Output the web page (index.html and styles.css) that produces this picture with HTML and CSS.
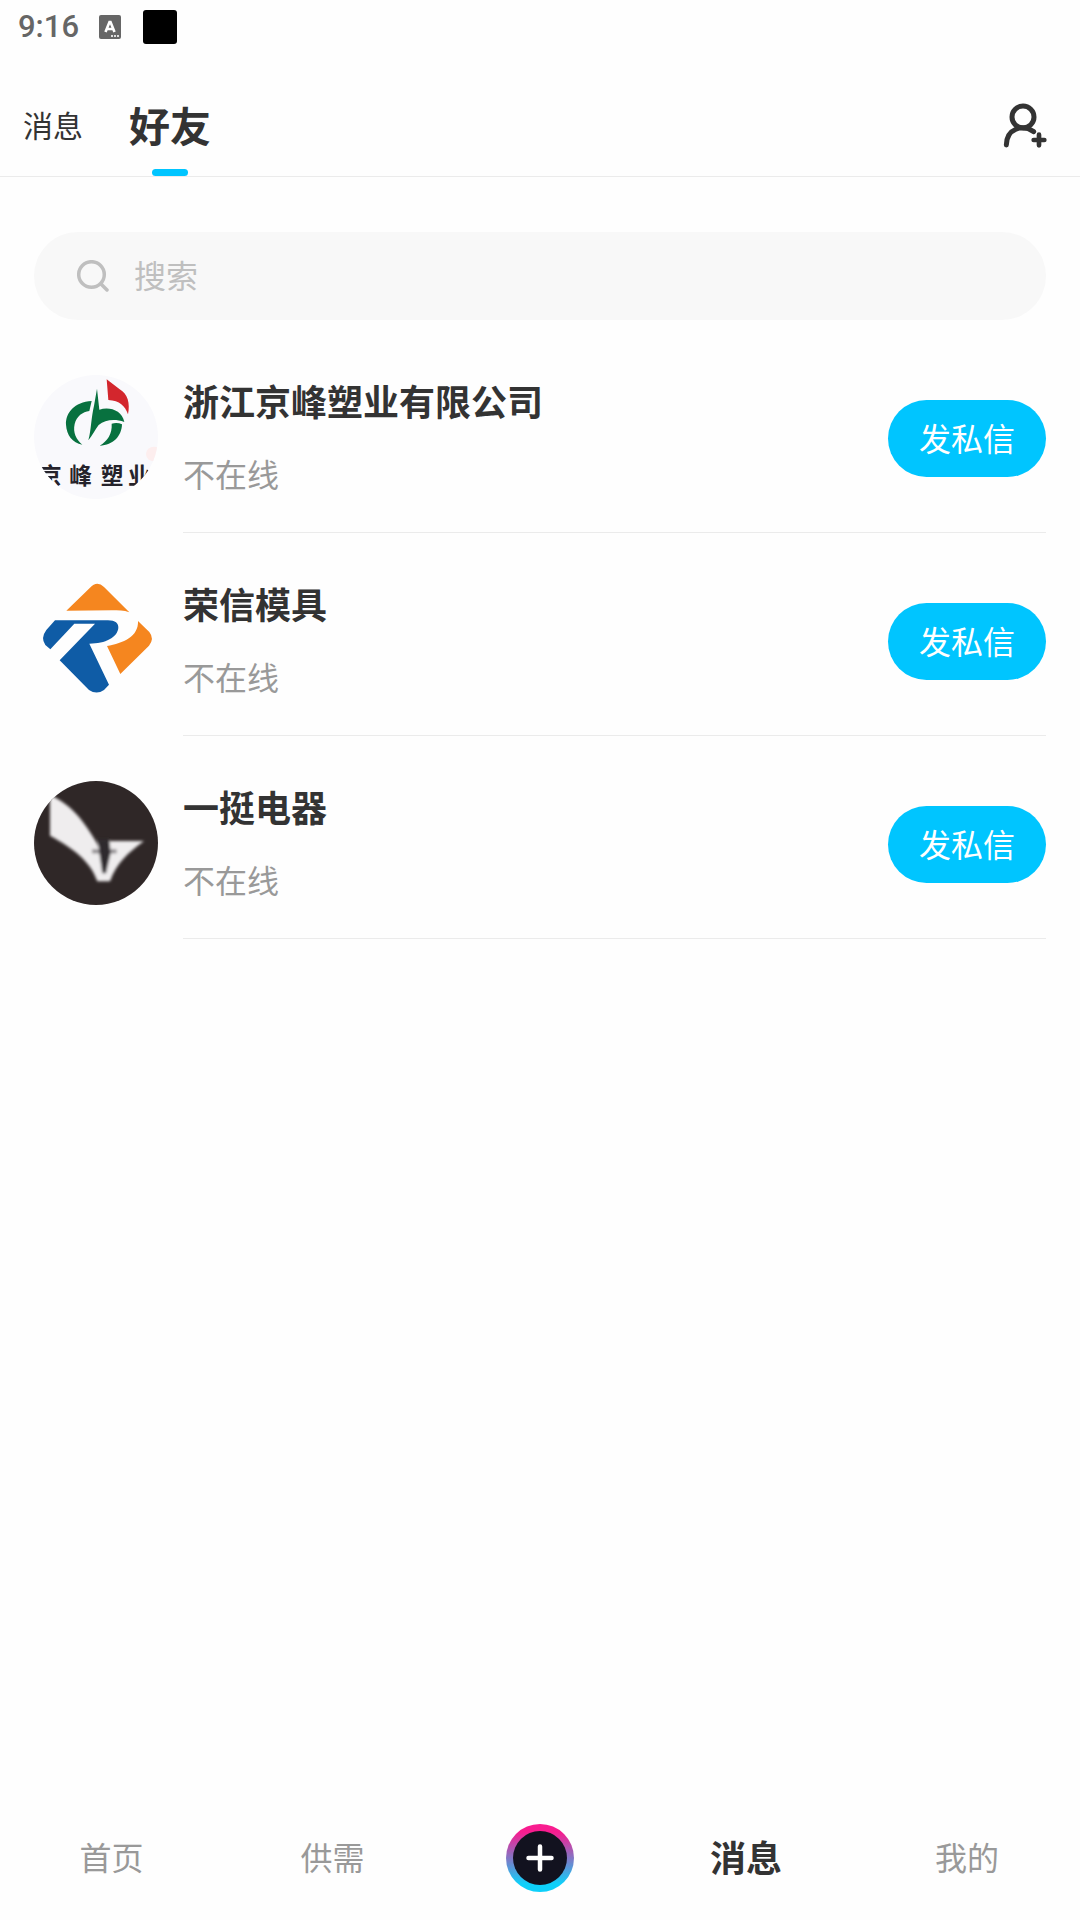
FILE: index.html
```html
<!DOCTYPE html>
<html lang="zh-CN">
<head>
<meta charset="utf-8">
<meta name="viewport" content="width=device-width, initial-scale=1">
<title>好友</title>
<link rel="stylesheet" href="styles.css">
</head>
<body>
<div class="status-bar">
  <span class="clock">9:16</span>
  <svg class="ime-icon" viewBox="0 0 22 24" aria-hidden="true">
    <rect width="22" height="24" rx="2" fill="#666"/>
    <path d="M6.500 17 10.500 7h1L15.500 17M8 14h6" fill="none" stroke="#fff" stroke-width="2.600"/>
    <path d="M12 21h2m1 0h2m1 0h2" stroke="#ddd" stroke-width="2"/>
  </svg>
  <span class="status-block"></span>
</div>

<header class="header">
  <nav class="tabs">
    <a class="tab" href="#messages">消息</a>
    <a class="tab tab-active" href="#friends" aria-current="page">好友</a>
  </nav>
  <button class="add-friend" type="button" aria-label="添加好友">
    <svg viewBox="130 67 132 138" fill="none" stroke="#333" stroke-linecap="round" aria-hidden="true">
      <circle cx="190" cy="112" r="33" stroke-width="15"/>
      <path d="M140 196C141 146 188 133 222 156" stroke-width="15"/>
      <path d="M238 165v32M222 181h32" stroke-width="14"/>
    </svg>
  </button>
</header>

<main class="content">
  <label class="search">
    <svg class="search-icon" viewBox="0 0 32 32" fill="none" stroke="#bfbfbf" stroke-width="3.500" stroke-linecap="round" aria-hidden="true">
      <circle cx="14.500" cy="14.500" r="12.800"/>
      <path d="M24 24l6 6"/>
    </svg>
    <input class="search-input" type="text" placeholder="搜索" aria-label="搜索">
  </label>

  <ul class="friends">
    <li class="friend">
      <svg class="avatar" viewBox="42 45 372 372" role="img" aria-label="京峰塑业">
        <rect x="42" y="45" width="372" height="372" fill="#f9f9fc"/>
        <ellipse cx="402" cy="282" rx="24" ry="22" fill="#fdeeee"/>
        <path d="M260 58L299 88C323 101 331 131 324 163C315 137 299 122 265 120Z" fill="#d3262d"/>
        <path d="M215 123C163 126 137 158 138 194C140 226 157 247 187 254C169 239 158 218 164 192C170 169 188 155 208 153Z" fill="#08713f"/>
        <path d="M231 86L238 149C269 139 306 151 313 186C284 176 256 179 236 195C226 208 217 227 205 241C214 207 213 175 222 137Z" fill="#08713f"/>
        <path d="M275 191C287 188 297 189 306 193C305 228 280 256 239 257C262 243 277 222 275 191Z" fill="#08713f"/>
        <text class="logo-text" y="372"><tspan x="57">京</tspan><tspan x="148">峰</tspan><tspan x="242">塑</tspan><tspan x="324">业</tspan></text>
      </svg>
      <div class="friend-body">
        <div class="friend-info">
          <h2 class="friend-name">浙江京峰塑业有限公司</h2>
          <p class="friend-status">不在线</p>
        </div>
        <button class="message-button" type="button">发私信</button>
      </div>
    </li>
    <li class="friend">
      <svg class="avatar" viewBox="42 39 372 372" role="img" aria-label="荣信模具">
        <path d="M139 137L210 68Q231 46 252 66L328 142C311 136 295 136 275 136Z" fill="#f5861f"/>
        <path d="M354 168L388 201Q404 221 387 242L301 327L261 243C310 234 356 215 354 168Z" fill="#f5861f"/>
        <path d="M105 166H264C286 166 296 175 295 189C292 217 257 236 208 236L267 359L252 375Q230 390 207 375L119 286L225 176H163L91 253L76 240Q61 219 79 195Z" fill="#0f5ca6"/>
      </svg>
      <div class="friend-body">
        <div class="friend-info">
          <h2 class="friend-name">荣信模具</h2>
          <p class="friend-status">不在线</p>
        </div>
        <button class="message-button" type="button">发私信</button>
      </div>
    </li>
    <li class="friend">
      <svg class="avatar" viewBox="42 33 372 372" role="img" aria-label="一挺电器">
        <defs>
          <filter id="soften"><feGaussianBlur stdDeviation="4.500"/></filter>
        </defs>
        <rect x="42" y="33" width="372" height="372" fill="#2f2727"/>
        <g filter="url(#soften)">
          <path d="M90 75C155 103 196 159 232 222L240 240L254 253L268 240L264 213H372C322 250 290 279 270 334H232C211 272 158 234 90 197Z" fill="#efedee"/>
          <path d="M234 208H268L272 250L258 310H247L238 250Z" fill="#2f292d"/>
          <path d="M216 244H290" stroke="#2f292d" stroke-opacity="0.500" stroke-width="12"/>
        </g>
      </svg>
      <div class="friend-body">
        <div class="friend-info">
          <h2 class="friend-name">一挺电器</h2>
          <p class="friend-status">不在线</p>
        </div>
        <button class="message-button" type="button">发私信</button>
      </div>
    </li>
  </ul>
</main>

<nav class="bottom-nav">
  <a class="nav-item" href="#home">首页</a>
  <a class="nav-item" href="#market">供需</a>
  <button class="publish" type="button" aria-label="发布">
    <svg viewBox="0 0 68 68" aria-hidden="true">
      <defs>
        <linearGradient id="ring" x1="0" y1="0" x2="0" y2="1">
          <stop offset="0.120" stop-color="#f81c8f"/>
          <stop offset="0.880" stop-color="#0ed0fa"/>
        </linearGradient>
      </defs>
      <circle cx="34" cy="34" r="34" fill="url(#ring)"/>
      <circle cx="34" cy="34" r="27" fill="#12121f"/>
      <path d="M34 22.500v23M22.500 34h23" stroke="#fff" stroke-width="4.500" stroke-linecap="round"/>
    </svg>
  </button>
  <a class="nav-item nav-active" href="#messages" aria-current="page">消息</a>
  <a class="nav-item" href="#profile">我的</a>
</nav>
</body>
</html>
```
FILE: styles.css
```css
* {
  box-sizing: border-box;
}

body {
  display: flex;
  flex-direction: column;
  min-height: 100vh;
  margin: 0;
  background: #fefefe;
  color: #333;
  font-family: "Noto Sans CJK SC", sans-serif;
  font-size: 32px;
}

a {
  color: inherit;
  text-decoration: none;
}

button {
  padding: 0;
  border: 0;
  background: none;
  font: inherit;
  cursor: pointer;
}

svg {
  display: block;
}

/* Status bar */
.status-bar {
  display: flex;
  align-items: center;
  height: 54px;
  padding: 0 18px;
}

.clock {
  color: #666;
  font-family: Roboto, sans-serif;
  font-size: 31px;
  font-weight: 500;
  line-height: 56px;
}

.ime-icon {
  width: 22px;
  height: 24px;
  margin-left: 20px;
}

.status-block {
  width: 34px;
  height: 34px;
  margin-left: 22px;
  border-radius: 3px;
  background: #000;
}

/* Header */
.header {
  display: flex;
  justify-content: space-between;
  height: 123px;
  padding: 0 33px 0 23px;
  border-bottom: 1px solid #ebebeb;
}

.tabs {
  display: flex;
  gap: 46px;
}

.tab {
  display: flex;
  align-items: center;
  padding-top: 18px;
  font-size: 30px;
}

.tab-active {
  position: relative;
  font-size: 41px;
  font-weight: 700;
}

.tab-active::after {
  content: "";
  position: absolute;
  bottom: 0;
  left: 50%;
  width: 36px;
  height: 7px;
  margin-left: -18px;
  border-radius: 4px;
  background: #00c5ff;
}

.add-friend {
  align-self: center;
  padding-top: 20px;
}

.add-friend svg {
  width: 44px;
  height: 46px;
}

/* Search */
.content {
  flex: 1;
  padding: 55px 34px 0;
}

.search {
  display: flex;
  align-items: center;
  gap: 25px;
  height: 88px;
  padding: 0 43px;
  border-radius: 44px;
  background: #f8f8f8;
}

.search-icon {
  width: 32px;
  height: 32px;
}

.search-input {
  flex: 1;
  min-width: 0;
  padding: 0 0 4px;
  border: 0;
  outline: 0;
  background: none;
  color: #333;
  font: inherit;
}

.search-input::placeholder {
  color: #bfbfbf;
  opacity: 1;
}

/* Friend list */
.friends {
  margin: 10px 0 0;
  padding: 0;
  list-style: none;
}

.friend {
  display: flex;
  align-items: center;
  gap: 25px;
}

.avatar {
  flex: none;
  width: 124px;
  height: 124px;
  margin-top: 11px;
  border-radius: 50%;
}

.logo-text {
  fill: #25232b;
  font-family: "Noto Sans CJK SC", sans-serif;
  font-size: 68px;
  font-weight: 700;
}

.friend-body {
  display: flex;
  flex: 1;
  align-items: center;
  justify-content: space-between;
  height: 203px;
  padding-top: 15px;
  border-bottom: 1px solid #ebebeb;
}

.friend-info {
  padding-bottom: 4px;
}

.friend-name,
.friend-status {
  margin: 0;
  line-height: 48px;
}

.friend-name {
  font-size: 36px;
  font-weight: 700;
}

.friend-status {
  margin-top: 25px;
  color: #999;
}

.message-button {
  width: 158px;
  height: 77px;
  padding-bottom: 3px;
  border-radius: 39px;
  background: #00c5ff;
  color: #fff;
}

/* Bottom navigation */
.bottom-nav {
  display: grid;
  grid-template-columns: 223fr 219fr 196fr 216fr 226fr;
  align-items: center;
  justify-items: center;
  height: 124px;
}

.nav-item {
  padding-bottom: 4px;
  color: #999;
}

.nav-active {
  color: #333;
  font-size: 36px;
  font-weight: 700;
}

.publish svg {
  width: 68px;
  height: 68px;
}
```
